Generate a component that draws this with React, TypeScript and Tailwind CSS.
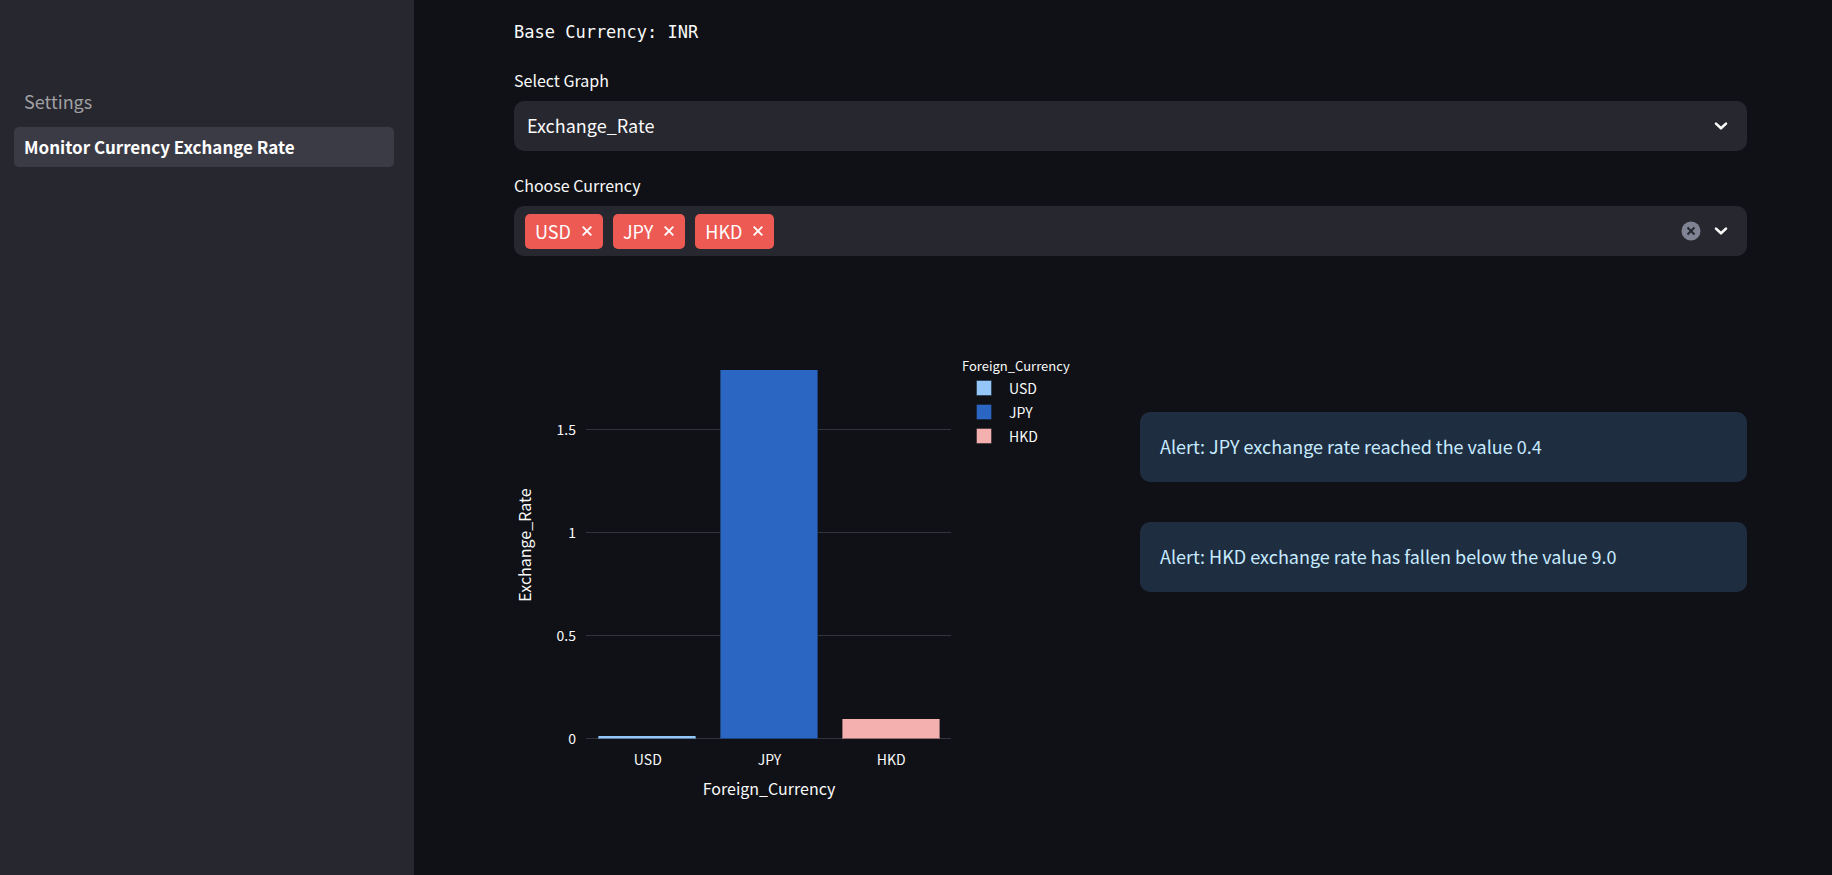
import { useState } from "react";

const rates = [
  { code: "USD", value: 0.012, fill: "#93c7fa" },
  { code: "JPY", value: 1.787, fill: "#2b67c2" },
  { code: "HKD", value: 0.094, fill: "#f4b0ae" },
];

const ticks = [0, 0.5, 1, 1.5];

const PLOT_LEFT = 72;
const PLOT_RIGHT = 437;
const BASELINE = 442;
const UNIT = 206;
const BAR = 97;
const SLOT = (PLOT_RIGHT - PLOT_LEFT) / rates.length;

function Chevron() {
  return (
    <svg viewBox="0 0 20 20" className="size-5 shrink-0" aria-hidden="true">
      <path
        d="M5 7.6l5 4.7 5-4.7"
        fill="none"
        stroke="currentColor"
        strokeWidth="2.6"
        strokeLinecap="round"
        strokeLinejoin="round"
      />
    </svg>
  );
}

function RateChart() {
  return (
    <svg
      viewBox="0 0 606 530"
      preserveAspectRatio="xMinYMin meet"
      className="h-[530px] w-full overflow-visible fill-[#fafafa] text-[14px]"
      role="img"
      aria-label="Exchange_Rate by Foreign_Currency"
    >
      {ticks.map((t) => (
        <g key={t}>
          <rect x={PLOT_LEFT} y={BASELINE - t * UNIT} width={PLOT_RIGHT - PLOT_LEFT} height={1} fill="#31333f" />
          <text x={62} y={BASELINE - t * UNIT + 6} textAnchor="end">
            {t}
          </text>
        </g>
      ))}
      {rates.map((r, i) => {
        const center = PLOT_LEFT + SLOT * (i + 0.5);
        const left = Math.round(center - BAR / 2);
        const height = Math.round(r.value * UNIT);
        const top = BASELINE - height;
        return (
          <g key={r.code}>
            <rect x={left} y={top} width={BAR + 1} height={height + 1} fill={r.fill} />
            <path
              d={`M${left + 0.5} ${top}V${BASELINE + 0.5}H${left + BAR + 0.5}V${top}`}
              fill="none"
              stroke="#0f1116"
              strokeOpacity={0.4}
            />
            <text x={center + 1} y={469} textAnchor="middle">
              {r.code}
            </text>
          </g>
        );
      })}
      <text x={255} y={499} textAnchor="middle" className="text-[16px]">
        Foreign_Currency
      </text>
      <text transform="translate(17 249) rotate(-90)" textAnchor="middle" className="text-[16px]">
        Exchange_Rate
      </text>
      <text x={448} y={75} className="text-[13px]">
        Foreign_Currency
      </text>
      {rates.map((r, i) => (
        <g key={r.code}>
          <rect x={462.5} y={84.5 + i * 24} width={15} height={15} fill={r.fill} stroke="#0f1116" strokeOpacity={0.4} />
          <text x={495} y={98 + i * 24}>
            {r.code}
          </text>
        </g>
      ))}
    </svg>
  );
}

function Alert({ children }: { children: string }) {
  return (
    <div role="alert" className="rounded-[10px] bg-[#1f2d41] px-5 pt-[21px] pb-[23px] text-[18px] leading-[26px] text-[#c7ebff]">
      {children}
    </div>
  );
}

export default function App() {
  const [selected, setSelected] = useState(["USD", "JPY", "HKD"]);

  return (
    <div className="flex min-h-screen bg-[#0f1116] font-['Noto_Sans_CJK_SC',sans-serif] text-[#fafafa]">
      <aside className="w-[414px] shrink-0 bg-[#27272f] pr-5 pl-3.5 pt-[82px]">
        <nav className="flex flex-col gap-[5px]">
          <a href="#settings" className="rounded-[5px] px-2.5 pb-0.5 text-[18px] leading-[38px] text-[#a0a0a3]">
            Settings
          </a>
          <a
            href="#monitor"
            aria-current="page"
            className="rounded-[5px] bg-[#3b3b45] px-2.5 text-[17px] leading-10 font-bold text-white"
          >
            Monitor Currency Exchange Rate
          </a>
        </nav>
      </aside>

      <main className="min-w-0 grow pt-5 pr-[85px] pl-[100px]">
        <p className="font-['DejaVu_Sans_Mono',monospace] text-[17px] leading-6">Base Currency: INR</p>

        <label htmlFor="graph" className="mt-[25px] block text-[16px] leading-[22px]">
          Select Graph
        </label>
        <div className="mt-2.5 flex h-[50px] items-center rounded-[10px] bg-[#27272f] pr-4">
          <select
            id="graph"
            className="h-full grow appearance-none bg-transparent pb-0.5 pl-[13px] text-[18px] leading-[26px] outline-none"
          >
            <option>Exchange_Rate</option>
          </select>
          <Chevron />
        </div>

        <label htmlFor="currency" className="mt-[23px] block text-[16px] leading-[22px]">
          Choose Currency
        </label>
        <div className="mt-2.5 flex h-[50px] items-center rounded-[10px] bg-[#27272f] pr-4 pl-[11px]">
          <div className="flex gap-2.5">
            {selected.map((code) => (
              <span
                key={code}
                className="flex h-[35px] items-center gap-2.5 rounded-[5px] bg-[#ed5a53] px-2.5 text-[18px] leading-[26px] text-white"
              >
                {code}
                <button
                  type="button"
                  aria-label={`Remove ${code}`}
                  onClick={() => setSelected(selected.filter((c) => c !== code))}
                >
                  <svg viewBox="0 0 12 12" className="size-3" aria-hidden="true">
                    <path d="M1.7 1.7l8.6 8.6M10.3 1.7l-8.6 8.6" stroke="currentColor" strokeWidth="1.9" />
                  </svg>
                </button>
              </span>
            ))}
          </div>
          <input id="currency" className="h-full min-w-0 grow bg-transparent text-[18px] outline-none" />
          <button type="button" aria-label="Clear all" className="mr-2.5" onClick={() => setSelected([])}>
            <svg viewBox="0 0 20 20" className="size-5" aria-hidden="true">
              <circle cx="10" cy="10" r="9.5" fill="#808394" />
              <path d="M6.5 6.5l7 7M13.5 6.5l-7 7" stroke="#27272f" strokeWidth="2" />
            </svg>
          </button>
          <Chevron />
        </div>

        <div className="mt-10 grid grid-cols-2 gap-[19px]">
          <RateChart />
          <div className="flex flex-col gap-10 pt-[116px]">
            <Alert>Alert: JPY exchange rate reached the value 0.4</Alert>
            <Alert>Alert: HKD exchange rate has fallen below the value 9.0</Alert>
          </div>
        </div>
      </main>
    </div>
  );
}
